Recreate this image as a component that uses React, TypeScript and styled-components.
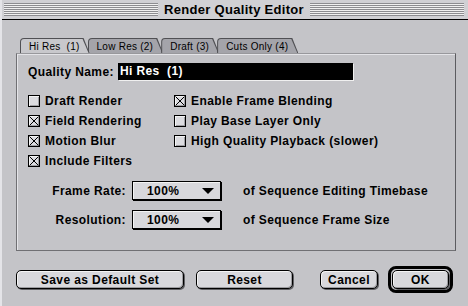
import React, { useState } from 'react';
import styled, { createGlobalStyle } from 'styled-components';

const GlobalStyle = createGlobalStyle`
  html, body {
    margin: 0;
    padding: 0;
    background: #c4c4c8;
  }
`;

const Window = styled.div`
  width: 468px;
  height: 306px;
  background: #c4c4c8;
  box-sizing: border-box;
  border-left: 2px solid #e4e4e8;
  font-family: "Liberation Sans", Arial, sans-serif;
  color: #000;
  overflow: hidden;
`;

const TitleBar = styled.div`
  height: 19px;
  display: flex;
  align-items: center;
  gap: 6px;
  padding: 0 4px 0 2px;
  background: #d0d0d4;
  border-bottom: 1px solid #000;
`;

const Stripes = styled.div`
  flex: 1;
  height: 13px;
  background: repeating-linear-gradient(
    to bottom,
    #8c8c90 0px,
    #8c8c90 1px,
    #f0f0f0 1px,
    #f0f0f0 2px
  );
`;

const Title = styled.div`
  font-size: 13px;
  font-weight: bold;
  letter-spacing: 0.3px;
  white-space: nowrap;
`;

const Body = styled.div`
  padding: 18px 12px 0 14px;
`;

const TabRow = styled.div`
  display: flex;
  gap: 1px;
  padding-left: 4px;
  height: 15px;
`;

const TabEdge = styled.div<{ $active?: boolean }>`
  position: relative;
  height: 15px;
  background: #505054;
  border-top-left-radius: 4px;
  clip-path: polygon(0 0, calc(100% - 6px) 0, 100% 100%, 0 100%);
  margin-right: -3px;
  z-index: ${(p) => (p.$active ? 2 : 1)};
`;

const TabFace = styled.div<{ $active?: boolean }>`
  height: 14px;
  margin: 1px 0 0 1px;
  padding: 0 10px 0 8px;
  border-top-left-radius: 3px;
  background: ${(p) => (p.$active ? '#c8c8cc' : '#a4a4aa')};
  clip-path: polygon(0 0, calc(100% - 7px) 0, calc(100% - 1px) 100%, 0 100%);
  font-size: 10px;
  letter-spacing: 0.25px;
  line-height: 15px;
  white-space: pre;
`;

const Panel = styled.div`
  height: 198px;
  box-sizing: border-box;
  border: 1px solid #707074;
  border-top-color: #98989c;
  border-right-color: #5c5c60;
  box-shadow: inset 1px 1px 0 #e4e4e8;
  padding: 9px 10px 0 11px;
`;

const NameRow = styled.div`
  display: flex;
  align-items: center;
  gap: 4px;
  height: 17px;
`;

const Label = styled.div`
  font-size: 12px;
  font-weight: bold;
  letter-spacing: 0.4px;
  white-space: nowrap;
`;

const NameField = styled.div`
  width: 235px;
  height: 17px;
  box-sizing: border-box;
  background: #000;
  color: #fff;
  font-size: 12px;
  font-weight: bold;
  letter-spacing: 0.4px;
  line-height: 17px;
  padding-left: 2px;
  white-space: pre;
  box-shadow: 1px 1px 0 #f0f0f0;
`;

const CheckGrid = styled.div`
  display: grid;
  grid-template-columns: 146px 1fr;
  grid-auto-rows: 20px;
  margin-top: 11px;
`;

const CheckItem = styled.label`
  display: flex;
  align-items: center;
  gap: 5px;
  font-size: 12px;
  font-weight: bold;
  letter-spacing: 0.4px;
  white-space: nowrap;
  cursor: default;
`;

const Box = styled.span`
  width: 12px;
  height: 12px;
  box-sizing: border-box;
  border: 1px solid #000;
  background: #dcdce0;
  box-shadow: inset 1px 1px 0 #f4f4f4, inset -1px -1px 0 #a0a0a4;
  display: flex;
  align-items: center;
  justify-content: center;
`;

const PopupRows = styled.div`
  display: flex;
  flex-direction: column;
  gap: 10px;
  margin-top: 10px;
`;

const PopupRow = styled.div`
  display: flex;
  align-items: center;
  height: 19px;
`;

const PopupLabel = styled(Label)`
  width: 98px;
  text-align: right;
`;

const Popup = styled.div`
  width: 89px;
  height: 19px;
  box-sizing: border-box;
  margin-left: 6px;
  border: 1px solid #000;
  background: #d8d8dc;
  box-shadow: inset 1px 1px 0 #f4f4f4, 1px 1px 0 #000;
  display: flex;
  align-items: center;
  justify-content: space-between;
  padding: 0 6px 0 14px;
  font-size: 12px;
  font-weight: bold;
  letter-spacing: 0.4px;
`;

const Arrow = styled.span`
  width: 0;
  height: 0;
  border-left: 6px solid transparent;
  border-right: 6px solid transparent;
  border-top: 6px solid #000;
`;

const PopupNote = styled(Label)`
  margin-left: 22px;
`;

const ButtonRow = styled.div`
  display: flex;
  align-items: center;
  margin-top: 15px;
  height: 27px;
`;

const Button = styled.button<{ $w: number; $ml?: number }>`
  width: ${(p) => p.$w}px;
  height: 19px;
  margin-left: ${(p) => p.$ml || 0}px;
  border: 1px solid #000;
  border-radius: 5px;
  background: #d8d8dc;
  box-shadow: inset 1px 1px 0 #f4f4f4, inset -1px -1px 0 #9c9ca0, 1px 1px 0 #606064;
  font-family: "Liberation Sans", Arial, sans-serif;
  font-size: 12px;
  font-weight: bold;
  letter-spacing: 0.4px;
  color: #000;
  padding: 0;
  cursor: default;
`;

const DefaultRing = styled.div`
  margin-left: 10px;
  padding: 1px;
  border: 3px solid #000;
  border-radius: 8px;
  display: flex;
`;

const tabs = ['Hi Res  (1)', 'Low Res (2)', 'Draft (3)', 'Cuts Only (4)'];

const checks: [string, boolean][][] = [
  [['Draft Render', false], ['Enable Frame Blending', true]],
  [['Field Rendering', true], ['Play Base Layer Only', false]],
  [['Motion Blur', true], ['High Quality Playback (slower)', false]],
  [['Include Filters', true]],
];

const Cross = () => (
  <svg width="10" height="10" viewBox="0 0 10 10">
    <path d="M0.5 0.5 L9.5 9.5 M9.5 0.5 L0.5 9.5" stroke="#000" strokeWidth="1" />
  </svg>
);

const Check: React.FC<{ label: string; on: boolean }> = ({ label, on }) => (
  <CheckItem>
    <Box>{on && <Cross />}</Box>
    {label}
  </CheckItem>
);

const App: React.FC = () => {
  const [active] = useState(0);

  return (
    <Window>
      <GlobalStyle />
      <TitleBar>
        <Stripes />
        <Title>Render Quality Editor</Title>
        <Stripes />
      </TitleBar>
      <Body>
        <TabRow>
          {tabs.map((t, i) => (
            <TabEdge key={t} $active={i === active}>
              <TabFace $active={i === active}>{t}</TabFace>
            </TabEdge>
          ))}
        </TabRow>
        <Panel>
          <NameRow>
            <Label>Quality Name:</Label>
            <NameField>Hi Res  (1)</NameField>
          </NameRow>
          <CheckGrid>
            {checks.flat().map(([label, on]) => (
              <Check key={label} label={label} on={on} />
            ))}
          </CheckGrid>
          <PopupRows>
            <PopupRow>
              <PopupLabel>Frame Rate:</PopupLabel>
              <Popup>
                100%
                <Arrow />
              </Popup>
              <PopupNote>of Sequence Editing Timebase</PopupNote>
            </PopupRow>
            <PopupRow>
              <PopupLabel>Resolution:</PopupLabel>
              <Popup>
                100%
                <Arrow />
              </Popup>
              <PopupNote>of Sequence Frame Size</PopupNote>
            </PopupRow>
          </PopupRows>
        </Panel>
        <ButtonRow>
          <Button $w={168}>Save as Default Set</Button>
          <Button $w={97} $ml={12}>Reset</Button>
          <Button $w={58} $ml={27}>Cancel</Button>
          <DefaultRing>
            <Button $w={57}>OK</Button>
          </DefaultRing>
        </ButtonRow>
      </Body>
    </Window>
  );
};

export default App;
